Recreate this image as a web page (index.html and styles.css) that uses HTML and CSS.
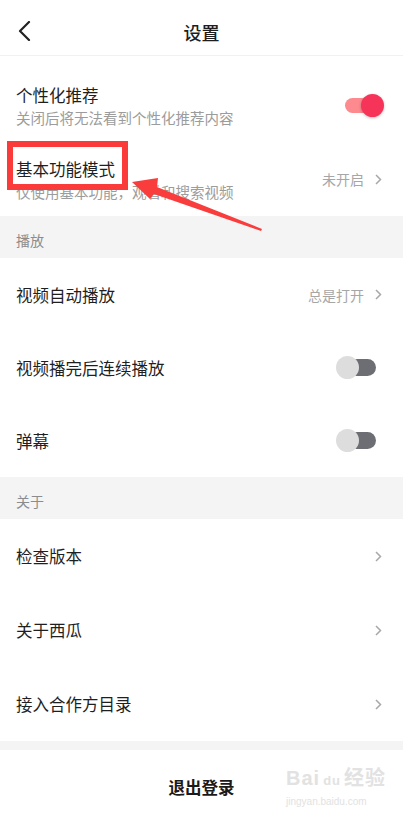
FILE: index.html
```html
<!DOCTYPE html>
<html lang="zh-CN">
<head>
<meta charset="utf-8">
<title>设置</title>
<link rel="stylesheet" href="styles.css">
</head>
<body>
<div class="page">
  <header class="nav">
    <svg class="back" width="14" height="20" viewBox="0 0 14 20"><polyline points="12,1 3,10 12,19" fill="none" stroke="#222" stroke-width="2.2" stroke-linecap="round" stroke-linejoin="round"/></svg>
    <h1 class="nav-title">设置</h1>
    <span></span>
  </header>

  <div class="group first">
    <div class="row tall">
      <div class="text">
        <div class="title">个性化推荐</div>
        <div class="sub">关闭后将无法看到个性化推荐内容</div>
      </div>
      <span class="switch on"></span>
    </div>
    <div class="row tall">
      <div class="text">
        <div class="title">基本功能模式</div>
        <div class="sub">仅使用基本功能，观看和搜索视频</div>
      </div>
      <span class="value">未开启<svg class="chev" width="7" height="11" viewBox="0 0 7 11"><polyline points="1,1 5.5,5.5 1,10" fill="none" stroke="#a8a8a8" stroke-width="1.5"/></svg></span>
    </div>
  </div>

  <div class="section">播放</div>
  <div class="group">
    <div class="row">
      <div class="title">视频自动播放</div>
      <span class="value">总是打开<svg class="chev" width="7" height="11" viewBox="0 0 7 11"><polyline points="1,1 5.5,5.5 1,10" fill="none" stroke="#a8a8a8" stroke-width="1.5"/></svg></span>
    </div>
    <div class="row">
      <div class="title">视频播完后连续播放</div>
      <span class="switch off"></span>
    </div>
    <div class="row">
      <div class="title">弹幕</div>
      <span class="switch off"></span>
    </div>
  </div>

  <div class="section">关于</div>
  <div class="group">
    <div class="row wide">
      <div class="title">检查版本</div>
      <svg class="chev" width="7" height="11" viewBox="0 0 7 11"><polyline points="1,1 5.5,5.5 1,10" fill="none" stroke="#a8a8a8" stroke-width="1.5"/></svg>
    </div>
    <div class="row wide">
      <div class="title">关于西瓜</div>
      <svg class="chev" width="7" height="11" viewBox="0 0 7 11"><polyline points="1,1 5.5,5.5 1,10" fill="none" stroke="#a8a8a8" stroke-width="1.5"/></svg>
    </div>
    <div class="row wide">
      <div class="title">接入合作方目录</div>
      <svg class="chev" width="7" height="11" viewBox="0 0 7 11"><polyline points="1,1 5.5,5.5 1,10" fill="none" stroke="#a8a8a8" stroke-width="1.5"/></svg>
    </div>
  </div>

  <div class="gap"></div>
  <div class="logout">退出登录</div>

  <div class="watermark">
    <div class="wm-main">Bai<span class="wm-du">du</span>经验</div>
    <div class="wm-url">jingyan.baidu.com</div>
  </div>

  <div class="mark-box"></div>
  <svg class="mark-arrow" width="403" height="817" viewBox="0 0 403 817">
    <polygon points="132,182 158,178 157,187 262,229 261,231 154,194 150,199" fill="#f93d3d"/>
  </svg>
</div>
</body>
</html>
```

FILE: styles.css
```css
* { box-sizing: border-box; }
html, body { margin: 0; padding: 0; background: #fff; }
body {
  font-family: "Noto Sans CJK SC", "Noto Sans", sans-serif;
  color: #222;
}
.page {
  position: relative;
  width: 403px;
  min-height: 817px;
  overflow: hidden;
}
.nav {
  height: 56px;
  padding-top: 9px;
  display: grid;
  grid-template-columns: 56px 1fr 56px;
  align-items: center;
  border-bottom: 1px solid #f1f1f1;
}
.back { margin-left: 17px; margin-top: -2px; }
.nav-title {
  margin: 0;
  text-align: center;
  font-size: 18px;
  font-weight: 500;
  line-height: 46px;
  height: 46px;
  color: #1e1e1e;
}
.group.first { padding-top: 12px; }
.row {
  height: 73px;
  padding: 0 21px 0 16px;
  display: flex;
  align-items: center;
  justify-content: space-between;
}
.row.tall { height: 74px; }
.row.wide { height: 74px; }
.title {
  font-size: 16.5px;
  line-height: 24px;
  color: #1f1f1f;
  white-space: nowrap;
}
.sub {
  margin-top: 1px;
  font-size: 14.5px;
  line-height: 20px;
  color: #9c9c9c;
  white-space: nowrap;
}
.value {
  display: flex;
  align-items: center;
  gap: 11px;
  font-size: 14px;
  color: #a6a6a6;
}
.chev { display: block; }
.switch {
  position: relative;
  display: block;
  height: 23px;
}
.switch.on { width: 39px; margin-right: -2px; }
.switch.on::before {
  content: "";
  position: absolute;
  left: 0; top: 4px;
  width: 33px; height: 15px;
  border-radius: 8px;
  background: #fc8a8f;
}
.switch.on::after {
  content: "";
  position: absolute;
  right: 0; top: 0;
  width: 23px; height: 23px;
  border-radius: 50%;
  background: #f6345a;
  box-shadow: 0 1px 3px rgba(0,0,0,0.25);
}
.switch.off { width: 40px; margin-right: 6px; }
.switch.off::before {
  content: "";
  position: absolute;
  right: 0; top: 3px;
  width: 28px; height: 17px;
  border-radius: 9px;
  background: #6c6e73;
}
.switch.off::after {
  content: "";
  position: absolute;
  left: 0; top: 0;
  width: 23px; height: 23px;
  border-radius: 50%;
  background: #dddddd;
}
.section {
  height: 42px;
  padding: 6px 0 0 16px;
  display: flex;
  align-items: center;
  background: #f4f4f4;
  font-size: 14px;
  color: #8c8c8c;
}
.gap {
  height: 9px;
  background: #f4f4f4;
}
.logout {
  height: 74px;
  display: flex;
  align-items: center;
  justify-content: center;
  font-size: 16.5px;
  font-weight: 700;
  color: #1a1a1a;
}
.watermark {
  position: absolute;
  left: 286px;
  top: 766px;
  color: #e2e2e2;
  pointer-events: none;
}
.wm-main {
  font-family: "Liberation Sans", "Noto Sans CJK SC", sans-serif;
  font-size: 20px;
  font-weight: 700;
  line-height: 24px;
  letter-spacing: 1px;
}
.wm-du {
  font-size: 13px;
  margin: 0 3px;
}
.wm-url {
  font-family: "Liberation Sans", sans-serif;
  font-size: 10px;
  line-height: 14px;
  margin-top: 2px;
}
.mark-box {
  position: absolute;
  left: 7px;
  top: 141px;
  width: 121px;
  height: 49px;
  border: 6px solid #fb3a3a;
}
.mark-arrow {
  position: absolute;
  left: 0;
  top: 0;
  pointer-events: none;
}
```
